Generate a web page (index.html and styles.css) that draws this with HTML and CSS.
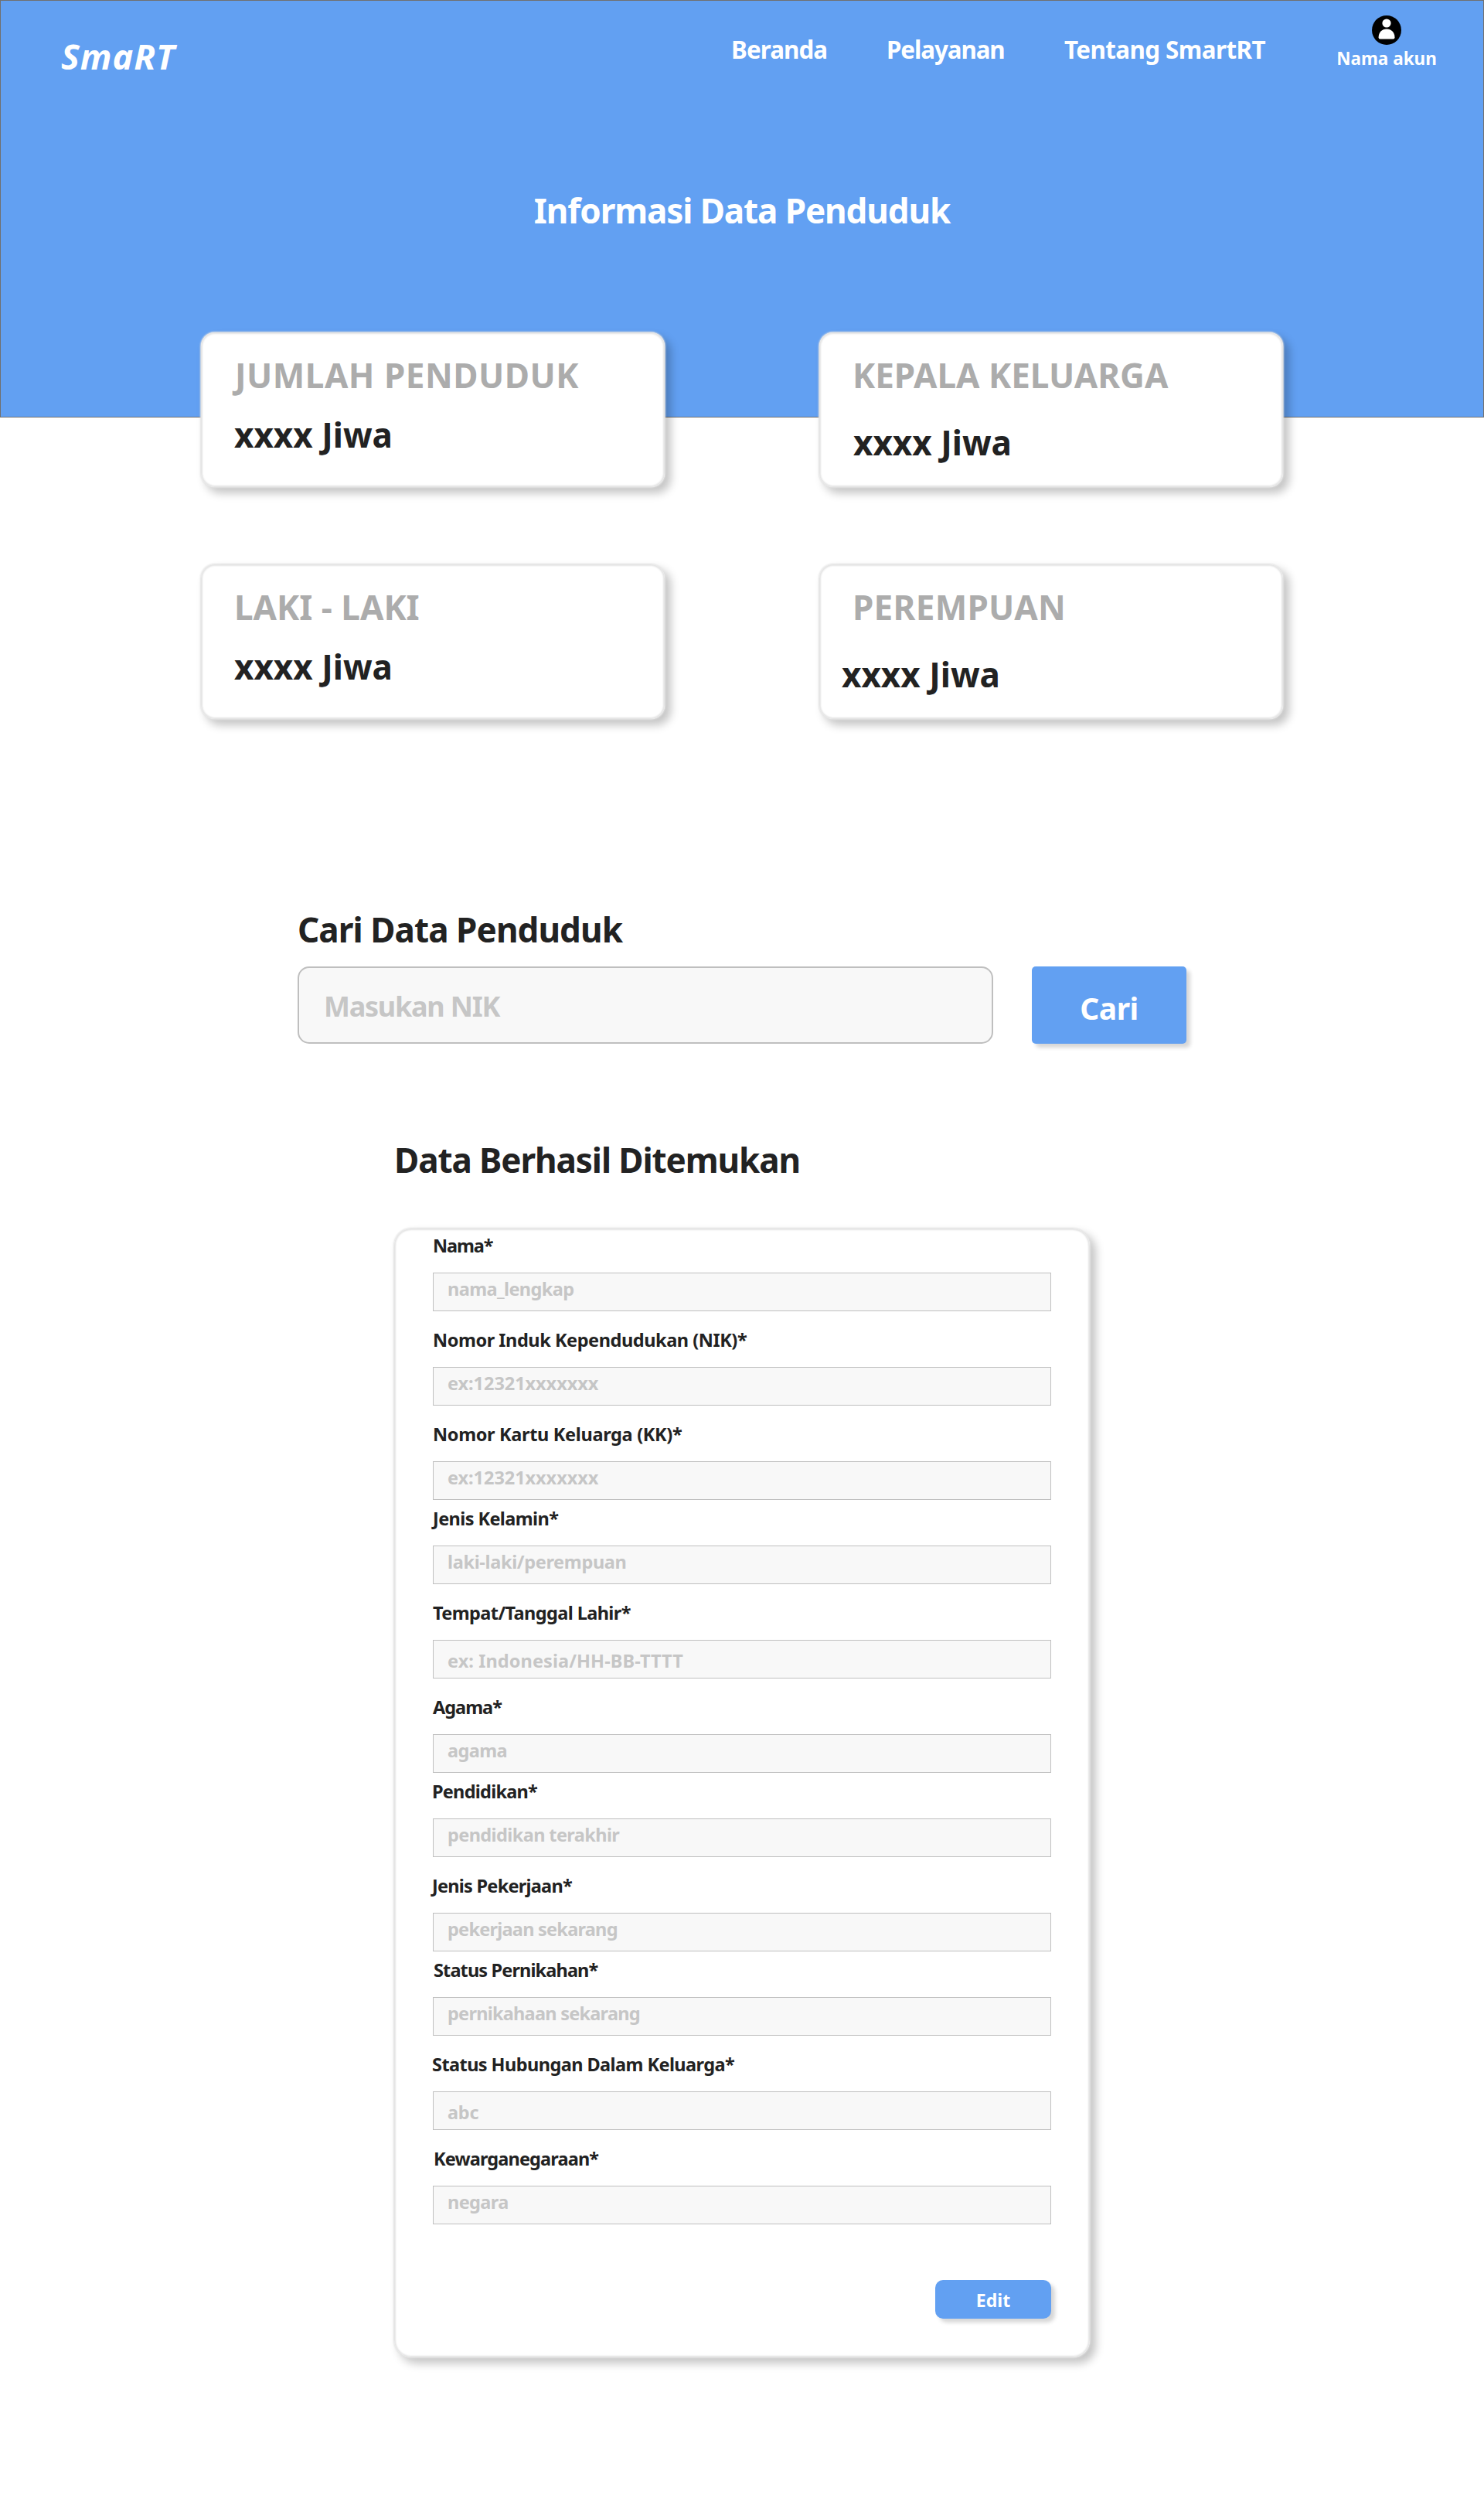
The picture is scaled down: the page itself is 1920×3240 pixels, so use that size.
FILE: index.html
```html
<!DOCTYPE html>
<html lang="id">
<head>
<meta charset="utf-8">
<title>SmaRT</title>
<link rel="stylesheet" href="styles.css">
</head>
<body>
<header class="hero">
  <div class="topbar">
    <a class="logo">SmaRT</a>
    <a class="nav-link">Beranda</a>
    <a class="nav-link nav-link--snug">Pelayanan</a>
    <a class="nav-link nav-link--loose">Tentang SmartRT</a>
    <a class="account">
      <svg class="account__icon" viewBox="0 0 38 38" aria-hidden="true">
        <circle cx="19" cy="19" r="19" fill="#000"/>
        <circle cx="19" cy="10" r="5.6" fill="#fff"/>
        <path d="M8.600 28.500C8.600 21.500 13 17.400 19 17.400S29.500 21.500 29.500 28.500Q29.500 30.600 27.500 30.600H10.600Q8.600 30.600 8.600 28.500Z" fill="#fff"/>
      </svg>
      <span class="account__name">Nama akun</span>
    </a>
  </div>
  <h1 class="hero__title">Informasi Data Penduduk</h1>
</header>
<main>
  <section class="stats">
    <article class="card stat">
      <h2 class="stat__label stat__label--first">JUMLAH PENDUDUK</h2>
      <p class="stat__value">xxxx Jiwa</p>
    </article>
    <article class="card stat">
      <h2 class="stat__label">KEPALA KELUARGA</h2>
      <p class="stat__value stat__value--low">xxxx Jiwa</p>
    </article>
    <article class="card stat">
      <h2 class="stat__label">LAKI - LAKI</h2>
      <p class="stat__value">xxxx Jiwa</p>
    </article>
    <article class="card stat">
      <h2 class="stat__label stat__label--wide">PEREMPUAN</h2>
      <p class="stat__value stat__value--low stat__value--outdent">xxxx Jiwa</p>
    </article>
  </section>

  <section class="search">
    <h2 class="heading">Cari Data Penduduk</h2>
    <div class="search__row">
      <div class="search__input">Masukan NIK</div>
      <div class="button search__button">Cari</div>
    </div>
  </section>

  <section class="result">
    <h2 class="heading heading--result">Data Berhasil Ditemukan</h2>
    <div class="card form">
      <div class="field name"><div class="field__label">Nama*</div><div class="field__input">nama_lengkap</div></div>
      <div class="field nik"><div class="field__label">Nomor Induk Kependudukan (NIK)*</div><div class="field__input">ex:12321xxxxxxx</div></div>
      <div class="field kk"><div class="field__label">Nomor Kartu Keluarga (KK)*</div><div class="field__input">ex:12321xxxxxxx</div></div>
      <div class="field field--close gender"><div class="field__label">Jenis Kelamin*</div><div class="field__input">laki-laki/perempuan</div></div>
      <div class="field birth"><div class="field__label">Tempat/Tanggal Lahir*</div><div class="field__input field__input--low">ex: Indonesia/HH-BB-TTTT</div></div>
      <div class="field religion"><div class="field__label">Agama*</div><div class="field__input">agama</div></div>
      <div class="field field--close education"><div class="field__label">Pendidikan*</div><div class="field__input">pendidikan terakhir</div></div>
      <div class="field job"><div class="field__label">Jenis Pekerjaan*</div><div class="field__input">pekerjaan sekarang</div></div>
      <div class="field field--close marital"><div class="field__label">Status Pernikahan*</div><div class="field__input">pernikahaan sekarang</div></div>
      <div class="field relation"><div class="field__label">Status Hubungan Dalam Keluarga*</div><div class="field__input field__input--low">abc</div></div>
      <div class="field nationality"><div class="field__label">Kewarganegaraan*</div><div class="field__input">negara</div></div>
      <div class="button form__button">Edit</div>
    </div>
  </section>
</main>
</body>
</html>
```
FILE: styles.css
```css
* { box-sizing: border-box; }
body {
  margin: 0;
  min-height: 3240px;
  background: #fff;
  color: #222;
  font-family: "Segoe UI", "Noto Sans", "Open Sans", sans-serif;
  font-weight: 700;
}
h1, h2, p { margin: 0; font-size: 44px; line-height: 60px; font-weight: 700; white-space: nowrap; }

.hero { height: 540px; border: 1px solid #707070; background: #62a0f2; color: #fff; }
.topbar {
  display: grid;
  grid-template-columns: 867px 201px 230px 350px 134px;
  height: 241px;
  padding-left: 78px;
  white-space: nowrap;
}
.logo { padding-top: 42px; font-size: 45px; line-height: 60px; font-style: italic; letter-spacing: 1px; }
.nav-link { padding-top: 42px; font-size: 31.3px; line-height: 42px; letter-spacing: -.9px; }
.nav-link--snug { letter-spacing: -1.07px; }
.nav-link--loose { letter-spacing: -.55px; }
.account { display: flex; flex-direction: column; align-items: center; padding-top: 19px; }
.account__icon { width: 38px; height: 38px; }
.account__name { margin-top: 3px; font-size: 22.5px; line-height: 30px; }
.hero__title { text-align: center; letter-spacing: -1.1px; }

.card {
  border-radius: 18px;
  background: #fff;
  box-shadow: inset 0 0 2px 2px #e4e4e4, 0 0 2px 1px #e4e4e4, 7px 7px 12px 1px rgba(0, 0, 0, .23);
}
.stats {
  display: grid;
  grid-template: 200px 200px / 600px 600px;
  gap: 100px 200px;
  margin-top: -110px;
  padding-left: 260px;
}
.stat { padding: 25px 0 0 43px; }
.stat__label { color: #acacac; }
.stat__label--first { padding-left: 1px; letter-spacing: .5px; }
.stat__label--wide { letter-spacing: .3px; }
.stat__value { margin-top: 17px; }
.stat__value--low { margin-top: 27px; padding-left: 1px; }
.stat__value--outdent { margin-left: -15px; }

.search { width: 1150px; margin: 242px 0 0 385px; }
.search__row { display: flex; gap: 50px; margin-top: 18px; }
.search__input {
  width: 900px;
  height: 100px;
  padding: 25px 0 0 32px;
  border: 2px solid #bfbfbf;
  border-radius: 15px;
  background: #f8f8f8;
  color: #c6c6c6;
  font-size: 36px;
  line-height: 50px;
  letter-spacing: -1.25px;
}
.heading { letter-spacing: -.92px; }
.heading--result { letter-spacing: -1.08px; }
.button { background: #62a0f2; color: #fff; text-align: center; box-shadow: 5px 5px 5px rgba(0, 0, 0, .16); }
.search__button {
  width: 200px;
  height: 100px;
  padding-top: 27px;
  border-radius: 5px;
  font-size: 39px;
  line-height: 54px;
  letter-spacing: -.5px;
}

.result { width: 900px; margin: 120px 0 0 510px; }
.form {
  display: flex;
  flex-direction: column;
  height: 1460px;
  margin-top: 59px;
  padding: 6px 50px 0;
  border-radius: 22px;
}
.field { margin-bottom: 21px; font-size: 23.5px; line-height: 32px; white-space: nowrap; }
.field:has(+ .field--close) { margin-bottom: 8px; }
.field__label { height: 51px; }
.field__input {
  height: 50px;
  padding: 4px 0 0 18px;
  border: 1px solid #bfbfbf;
  background: #f8f8f8;
  color: #c6c6c6;
  letter-spacing: -.6px;
}
.field__input--low { padding-top: 10px; }

.name .field__label { letter-spacing: -1.1px; }
.nik .field__label { letter-spacing: -.44px; }
.kk .field__label { letter-spacing: -.33px; }
.gender .field__label { letter-spacing: -.6px; }
.birth .field__label { letter-spacing: -.6px; }
.religion .field__label { letter-spacing: -1px; }
.education .field__label { margin-left: -1px; letter-spacing: -.75px; }
.job .field__label { margin-left: -1px; letter-spacing: -.75px; }
.marital .field__label { margin-left: 1px; letter-spacing: -.87px; }
.relation .field__label { margin-left: -1px; letter-spacing: -.57px; }
.nationality .field__label { margin-left: 1px; letter-spacing: -.86px; }
.nik .field__input, .kk .field__input { letter-spacing: -.05px; }
.gender .field__input { letter-spacing: -.34px; }
.birth .field__input { letter-spacing: .09px; }
.job .field__input, .marital .field__input { letter-spacing: -.75px; }
.relation .field__input { letter-spacing: -.26px; }

.form__button {
  align-self: flex-end;
  width: 150px;
  height: 50px;
  margin-top: 51px;
  padding-top: 10px;
  border-radius: 10px;
  font-size: 23px;
  line-height: 32px;
}
```
